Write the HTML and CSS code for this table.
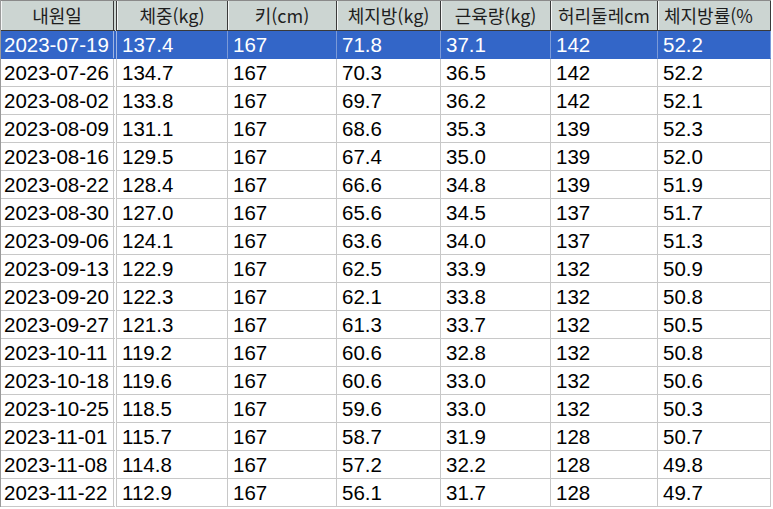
FILE: index.html
```html
<!DOCTYPE html>
<html lang="ko">
<head>
<meta charset="utf-8">
<title>체중 기록</title>
<link rel="stylesheet" href="styles.css">
</head>
<body>
<div class="grid">
  <div class="row head">
    <div class="cell c1">내원일</div>
    <div class="cell">체중(kg)</div>
    <div class="cell">키(cm)</div>
    <div class="cell">체지방(kg)</div>
    <div class="cell">근육량(kg)</div>
    <div class="cell">허리둘레cm</div>
    <div class="cell clip"><span class="clip-text">체지방률(%)</span></div>
  </div>
  <div class="row sel"><div class="cell c1">2023-07-19</div><div class="cell">137.4</div><div class="cell">167</div><div class="cell">71.8</div><div class="cell">37.1</div><div class="cell">142</div><div class="cell">52.2</div></div>
  <div class="row"><div class="cell c1">2023-07-26</div><div class="cell">134.7</div><div class="cell">167</div><div class="cell">70.3</div><div class="cell">36.5</div><div class="cell">142</div><div class="cell">52.2</div></div>
  <div class="row"><div class="cell c1">2023-08-02</div><div class="cell">133.8</div><div class="cell">167</div><div class="cell">69.7</div><div class="cell">36.2</div><div class="cell">142</div><div class="cell">52.1</div></div>
  <div class="row"><div class="cell c1">2023-08-09</div><div class="cell">131.1</div><div class="cell">167</div><div class="cell">68.6</div><div class="cell">35.3</div><div class="cell">139</div><div class="cell">52.3</div></div>
  <div class="row"><div class="cell c1">2023-08-16</div><div class="cell">129.5</div><div class="cell">167</div><div class="cell">67.4</div><div class="cell">35.0</div><div class="cell">139</div><div class="cell">52.0</div></div>
  <div class="row"><div class="cell c1">2023-08-22</div><div class="cell">128.4</div><div class="cell">167</div><div class="cell">66.6</div><div class="cell">34.8</div><div class="cell">139</div><div class="cell">51.9</div></div>
  <div class="row"><div class="cell c1">2023-08-30</div><div class="cell">127.0</div><div class="cell">167</div><div class="cell">65.6</div><div class="cell">34.5</div><div class="cell">137</div><div class="cell">51.7</div></div>
  <div class="row"><div class="cell c1">2023-09-06</div><div class="cell">124.1</div><div class="cell">167</div><div class="cell">63.6</div><div class="cell">34.0</div><div class="cell">137</div><div class="cell">51.3</div></div>
  <div class="row"><div class="cell c1">2023-09-13</div><div class="cell">122.9</div><div class="cell">167</div><div class="cell">62.5</div><div class="cell">33.9</div><div class="cell">132</div><div class="cell">50.9</div></div>
  <div class="row"><div class="cell c1">2023-09-20</div><div class="cell">122.3</div><div class="cell">167</div><div class="cell">62.1</div><div class="cell">33.8</div><div class="cell">132</div><div class="cell">50.8</div></div>
  <div class="row"><div class="cell c1">2023-09-27</div><div class="cell">121.3</div><div class="cell">167</div><div class="cell">61.3</div><div class="cell">33.7</div><div class="cell">132</div><div class="cell">50.5</div></div>
  <div class="row"><div class="cell c1">2023-10-11</div><div class="cell">119.2</div><div class="cell">167</div><div class="cell">60.6</div><div class="cell">32.8</div><div class="cell">132</div><div class="cell">50.8</div></div>
  <div class="row"><div class="cell c1">2023-10-18</div><div class="cell">119.6</div><div class="cell">167</div><div class="cell">60.6</div><div class="cell">33.0</div><div class="cell">132</div><div class="cell">50.6</div></div>
  <div class="row"><div class="cell c1">2023-10-25</div><div class="cell">118.5</div><div class="cell">167</div><div class="cell">59.6</div><div class="cell">33.0</div><div class="cell">132</div><div class="cell">50.3</div></div>
  <div class="row"><div class="cell c1">2023-11-01</div><div class="cell">115.7</div><div class="cell">167</div><div class="cell">58.7</div><div class="cell">31.9</div><div class="cell">128</div><div class="cell">50.7</div></div>
  <div class="row"><div class="cell c1">2023-11-08</div><div class="cell">114.8</div><div class="cell">167</div><div class="cell">57.2</div><div class="cell">32.2</div><div class="cell">128</div><div class="cell">49.8</div></div>
  <div class="row"><div class="cell c1">2023-11-22</div><div class="cell">112.9</div><div class="cell">167</div><div class="cell">56.1</div><div class="cell">31.7</div><div class="cell">128</div><div class="cell">49.7</div></div>
</div>
</body>
</html>
```

FILE: styles.css
```css
html, body {
  margin: 0;
  padding: 0;
  background: #ffffff;
}

.grid {
  width: 771px;
  border-left: 1px solid #9a9a9a;
  box-sizing: border-box;
}

.row {
  display: grid;
  grid-template-columns: 116px 111px 109px 104px 110px 107px 113px;
  height: 28px;
  font-family: "Liberation Sans", "Noto Sans CJK KR", sans-serif;
  font-size: 20.5px;
  color: #000;
}

.cell {
  box-sizing: border-box;
  border-right: 1px solid #c8c8c8;
  border-bottom: 1px solid #c8c8c8;
  padding-left: 5px;
  line-height: 27px;
  white-space: nowrap;
  overflow: hidden;
}

.cell.c1 {
  border-right: 4px double #c8c8c8;
  padding-left: 3px;
}

.head {
  height: 31px;
  background: #ccd5d2;
  font-family: "Noto Sans CJK KR", sans-serif;
  font-size: 18px;
  color: #1e1e1e;
  border-top: 1px solid #8a8a8a;
  box-sizing: border-box;
}

.head .cell {
  border-right: 1px solid #3a3a3a;
  border-bottom: 1px solid #3a3a3a;
  box-shadow: inset 1px 0 0 #f4f6f6;
  padding-left: 0;
  text-align: center;
  line-height: 28px;
}

.head .cell.c1 {
  border-right: 4px double #3a3a3a;
}

.head .cell.clip {
  text-align: left;
  padding-left: 6px;
}

.clip-text {
  display: inline-block;
  width: 89px;
  overflow: hidden;
  vertical-align: top;
}

.sel {
  background: #3366c8;
  color: #ffffff;
}

.sel .cell {
  border-right-color: #7b9ad8;
  border-bottom-color: #3366c8;
}

.sel .cell.c1 {
  border-right-color: #9fb6e3;
}
```
